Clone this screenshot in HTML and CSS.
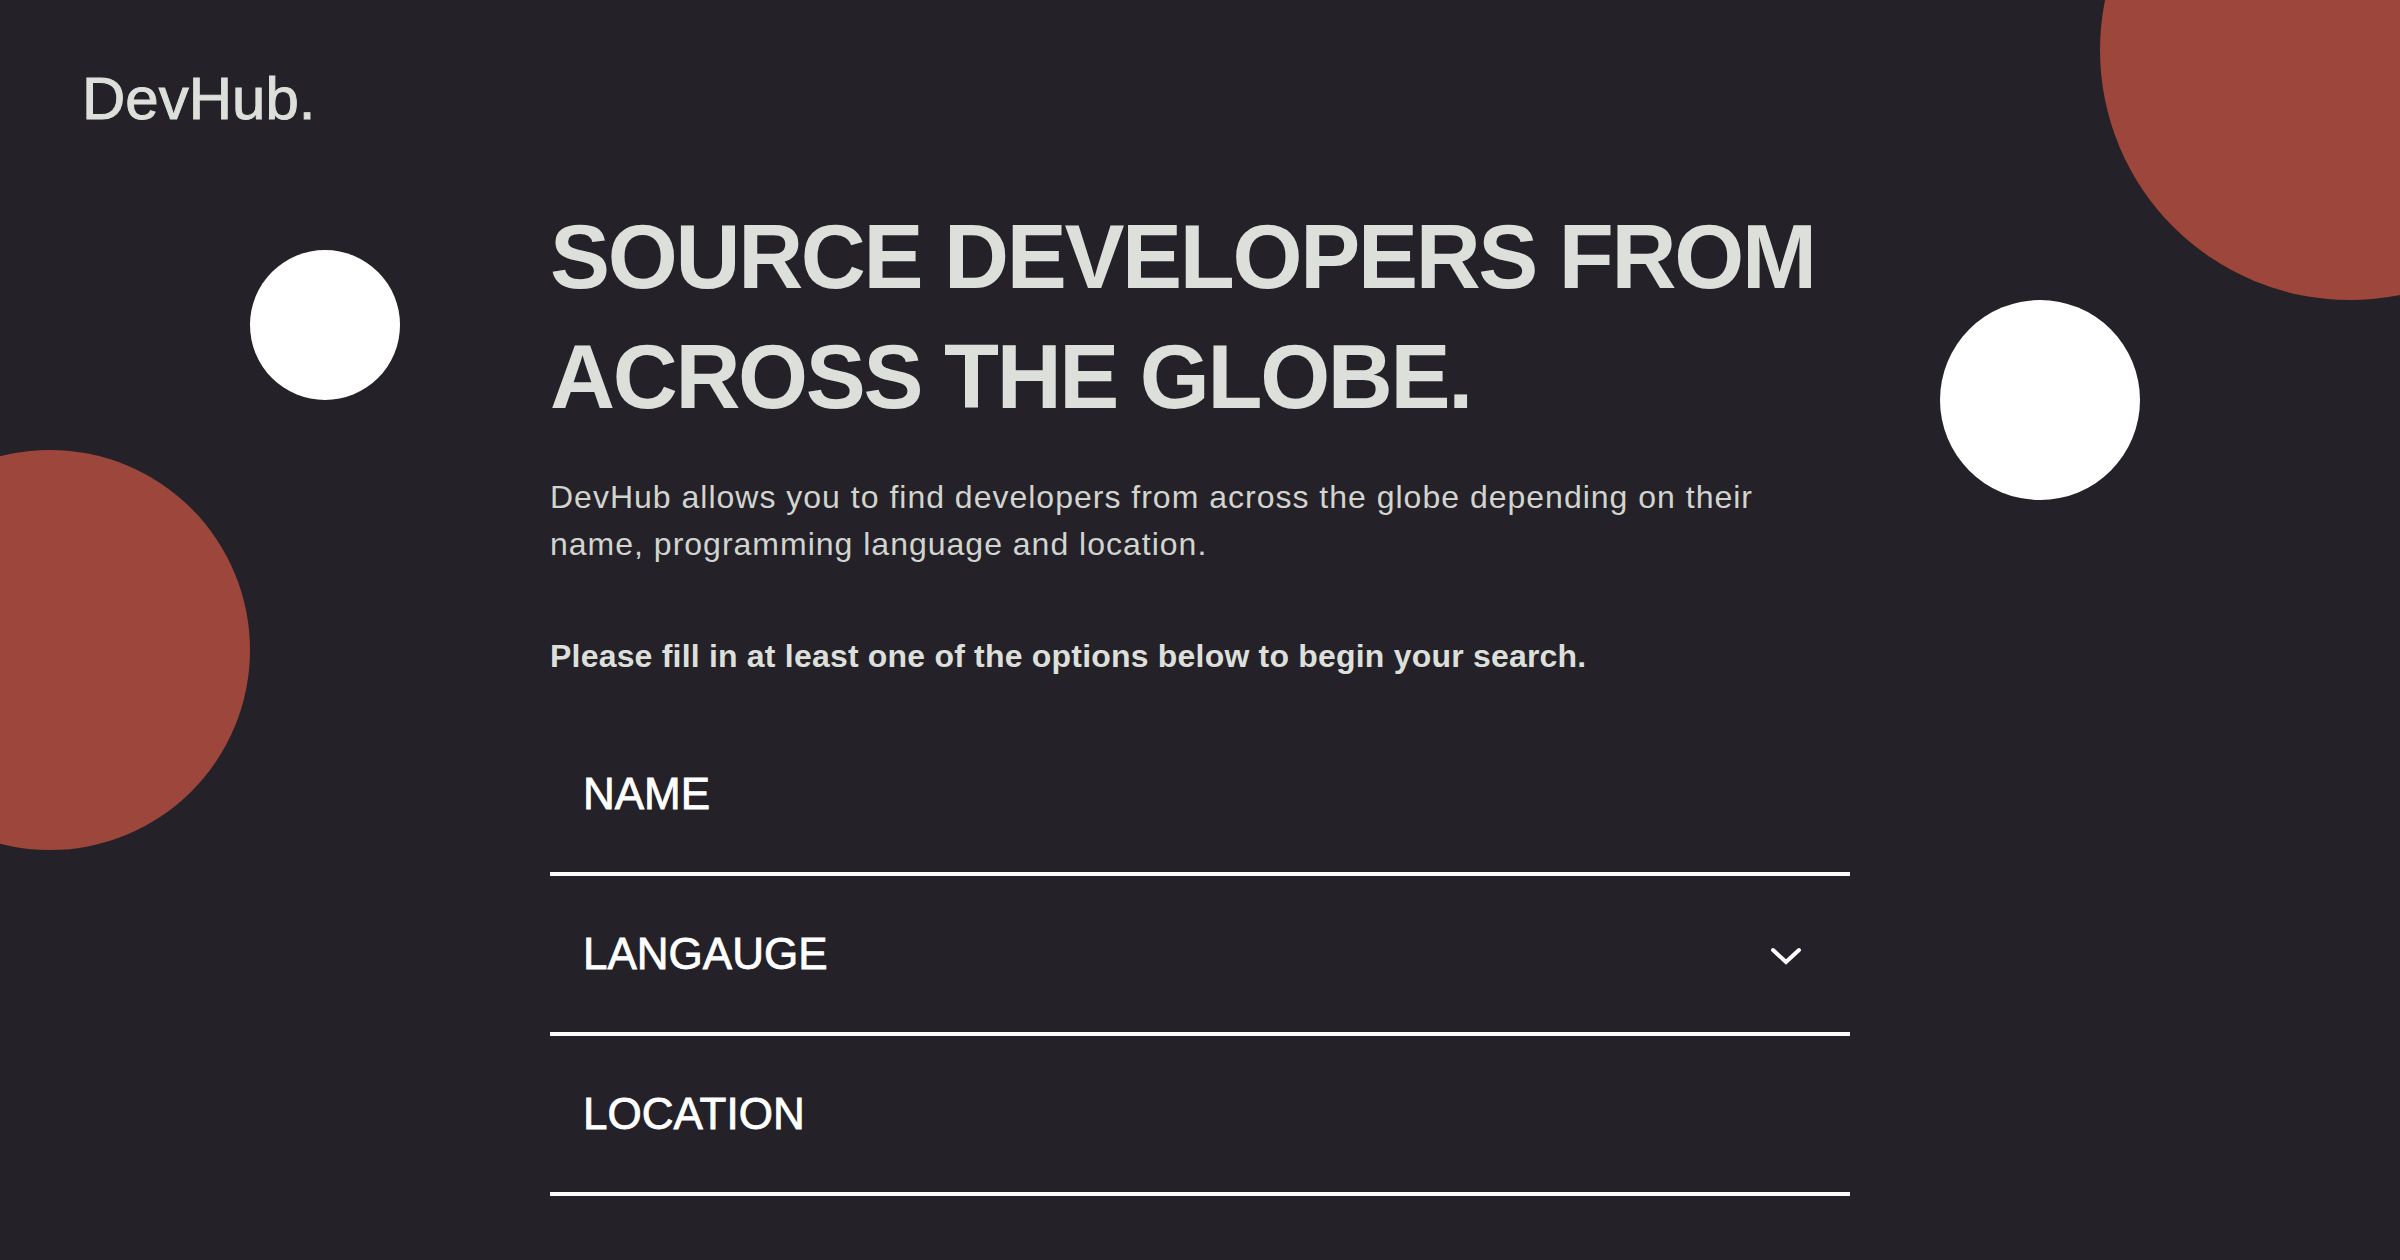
FILE: index.html
```html
<!DOCTYPE html>
<html lang="en">
<head>
<meta charset="utf-8">
<title>DevHub</title>
<link rel="stylesheet" href="styles.css">
</head>
<body>
<div class="page">
  <div class="blob blob-red-top"></div>
  <div class="blob blob-white-right"></div>
  <div class="blob blob-white-left"></div>
  <div class="blob blob-red-left"></div>

  <header class="header">
    <div class="logo">DevHub.</div>
  </header>

  <main class="main">
    <h1 class="title">SOURCE DEVELOPERS FROM<br>ACROSS THE GLOBE.</h1>
    <p class="intro">DevHub allows you to find developers from across the globe depending on their name, programming language and location.</p>
    <p class="prompt">Please fill in at least one of the options below to begin your search.</p>
    <form class="form">
      <div class="field"><span class="label">NAME</span></div>
      <div class="field"><span class="label">LANGAUGE</span>
        <svg class="chevron" width="32" height="20" viewBox="0 0 32 20"><path d="M3 4 L16 16 L29 4" fill="none" stroke="#ffffff" stroke-width="4" stroke-linecap="round" stroke-linejoin="miter"/></svg>
      </div>
      <div class="field"><span class="label">LOCATION</span></div>
    </form>
  </main>
</div>
</body>
</html>
```
FILE: styles.css
```css
* { box-sizing: border-box; }
html, body { margin: 0; padding: 0; }
body {
  background: #242228;
  font-family: "Liberation Sans", Arial, sans-serif;
  color: #dcdfda;
}
.page {
  position: relative;
  width: 2400px;
  height: 1260px;
  overflow: hidden;
}
.blob { position: absolute; border-radius: 50%; }
.blob-red-top { left: 2100px; top: -200px; width: 500px; height: 500px; background: #9d463b; }
.blob-white-right { left: 1940px; top: 300px; width: 200px; height: 200px; background: #ffffff; }
.blob-white-left { left: 250px; top: 250px; width: 150px; height: 150px; background: #ffffff; }
.blob-red-left { left: -150px; top: 450px; width: 400px; height: 400px; background: #9d463b; }

.header { padding: 64px 0 0 82px; }
.logo {
  font-size: 60px;
  line-height: 69px;
  color: #dcdfda;
  -webkit-text-stroke: 1px #dcdfda;
}

.main {
  position: relative;
  width: 1300px;
  margin: 64px auto 0;
}
.title {
  margin: 0;
  font-size: 90px;
  line-height: 120px;
  font-weight: 700;
  letter-spacing: -2.3px;
  color: #dcdfda;
}
.intro {
  margin: 37px 0 0;
  width: 1240px;
  font-size: 32px;
  line-height: 47px;
  font-weight: 400;
  letter-spacing: 1px;
  color: #d2d4cf;
}
.prompt {
  margin: 65px 0 0;
  font-size: 32px;
  line-height: 47px;
  font-weight: 700;
  letter-spacing: 0.2px;
  color: #dcdfda;
}
.form { margin-top: 36px; }
.field {
  height: 160px;
  border-bottom: 4px solid #ffffff;
  display: flex;
  align-items: center;
  justify-content: space-between;
  padding: 0 48px 0 33px;
}
.label {
  font-size: 44px;
  color: #ffffff;
  -webkit-text-stroke: 0.8px #ffffff;
}
.chevron { display: block; margin-top: 4px; }
```
